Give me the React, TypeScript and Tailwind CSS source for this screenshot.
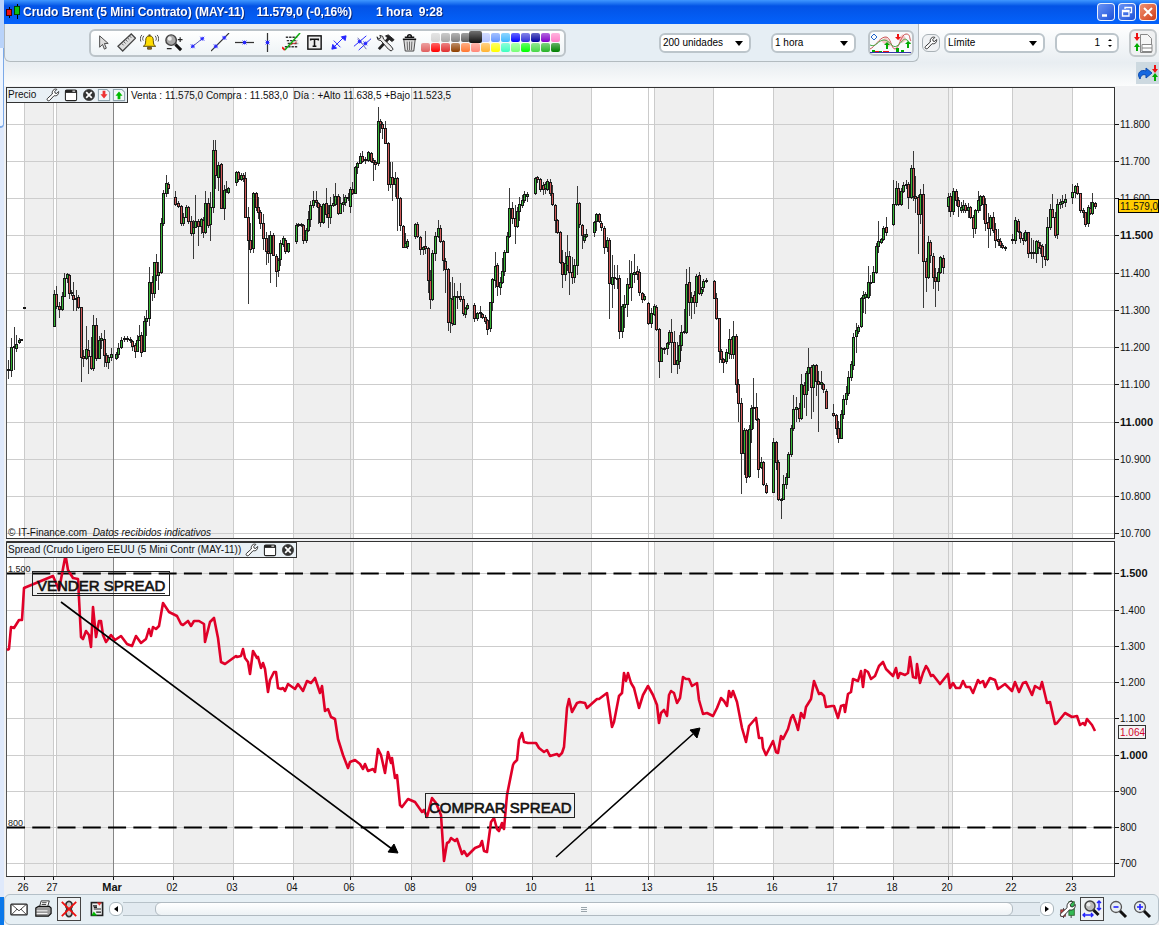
import type { ReactNode } from "react";

type Candle = [x: number, high: number, low: number, top: number, bottom: number, up: number];

const CANDLES: Candle[] = [
  [8,360,378,369,370,1],[11,338,376,347,370,1],[14,327,369,346,347,1],[16,335,351,344,348,1],[19,338,343,340,342,1],[21,339,340,339,340,1],[24,307,308,307,308,1],
  [54,290,326,294,326,1],[56,286,308,294,306,0],[59,302,317,306,309,0],[62,292,310,296,309,1],[64,273,296,278,296,1],[67,273,282,274,278,1],[69,274,298,275,293,0],[71,290,295,292,293,0],[73,282,310,295,299,0],[76,290,310,298,299,0],[78,295,308,297,307,0],[81,307,381,307,357,0],[83,350,366,356,358,0],[86,326,359,349,358,1],[88,340,373,350,356,0],[91,337,369,356,368,0],[93,315,370,325,368,1],[96,318,360,325,358,0],[99,336,358,340,358,1],[101,333,348,338,340,1],[104,330,366,339,355,0],[106,353,366,355,362,0],[108,355,368,357,362,1],[111,348,360,354,357,1],
  [116,352,359,354,358,1],[118,343,357,348,354,1],[121,337,348,340,347,1],[124,336,341,338,339,1],[127,336,341,338,339,1],[130,337,342,339,340,1],[132,340,350,341,346,0],[135,343,357,345,351,0],[137,335,351,340,351,1],[139,325,340,336,340,1],[141,332,356,335,352,0],[144,316,350,321,351,1],[146,310,335,318,321,1],[149,267,325,282,318,1],[152,276,300,282,293,0],[154,262,297,262,293,1],[156,254,280,262,275,0],[158,262,289,272,275,1],[161,218,273,223,272,1],[163,190,225,193,223,1],[166,175,196,183,193,1],[168,182,193,184,188,0],
  [175,191,205,197,204,0],[178,201,207,203,206,0],[181,205,225,206,223,0],[183,213,225,217,223,1],[186,205,217,207,217,1],[188,206,223,207,221,0],[191,216,235,221,233,0],[193,220,258,227,233,1],[195,195,227,221,227,1],[198,219,245,221,226,0],[201,218,233,219,226,1],[203,217,237,220,232,0],[205,191,233,203,232,1],[208,198,227,203,225,0],[210,192,240,207,224,1],[213,140,212,150,207,1],[215,140,188,150,175,0],[218,162,190,165,177,1],[221,163,208,164,208,0],[224,185,219,190,208,1],[226,181,192,189,190,1],[228,187,193,188,192,1],
  [236,171,185,172,182,1],[238,171,181,172,179,0],[241,173,180,175,179,1],[243,173,181,175,178,0],[245,172,217,178,217,0],[248,207,303,217,240,0],[250,223,252,240,249,0],[253,192,252,193,248,1],[256,192,210,193,207,0],[258,197,218,207,212,0],[260,210,228,212,223,0],[263,214,249,223,238,0],[266,232,264,238,251,0],[268,235,262,251,253,0],[270,231,282,235,253,1],[273,233,255,235,255,0],[276,254,286,256,271,0],[278,258,276,260,270,1],[280,240,265,243,259,1],[283,236,246,238,244,1],[285,238,253,240,251,0],[288,243,252,243,251,1],
  [296,223,243,225,241,1],[298,223,226,224,225,1],[301,223,226,224,225,1],[303,224,243,225,240,0],[306,228,242,230,240,1],[308,211,231,219,230,1],[310,201,226,205,219,1],[313,191,207,200,205,1],[316,191,206,200,202,0],[318,202,223,203,207,0],[320,204,226,206,222,0],[323,203,223,204,222,1],[326,188,217,203,214,0],[328,205,227,213,217,0],[330,197,223,205,217,1],[333,194,206,203,205,1],[335,183,205,196,204,1],[338,194,214,196,213,0],[340,197,213,203,213,1],[343,194,211,202,204,1],[345,195,205,197,202,1],[348,193,200,197,198,1],[350,187,212,189,206,1],[352,182,194,189,193,0],
  [355,166,193,167,193,1],[357,162,173,163,167,1],[360,153,163,156,163,1],[362,151,162,156,161,0],[365,157,163,159,160,1],[368,151,161,152,160,1],[371,152,162,153,161,0],[373,158,180,160,162,0],[375,160,169,162,164,0],[378,107,165,121,163,1],[380,119,132,121,124,0],[382,122,138,124,128,0],[385,121,143,128,143,0],[388,142,190,143,184,0],[390,162,187,177,184,1],[392,162,200,177,184,0],[395,172,196,178,184,1],[397,177,230,178,198,0],[400,197,230,198,225,0],[403,225,247,226,247,0],[405,233,247,243,247,1],[407,239,248,241,246,1],
  [415,223,238,224,236,1],[417,222,237,224,236,0],[420,236,254,237,249,0],[423,246,254,247,249,1],[425,231,253,246,248,0],[428,247,292,248,280,0],[430,270,308,280,299,0],[432,250,300,253,299,1],[435,232,260,236,253,1],[438,220,237,228,236,1],[440,225,242,228,241,0],[443,240,270,241,260,0],[445,258,292,261,269,0],[448,268,330,269,322,0],[450,282,332,298,322,1],[452,277,325,299,323,0],[454,283,324,296,324,1],[457,291,308,296,297,1],[460,283,301,296,299,0],[463,296,315,299,313,0],[465,307,317,308,314,1],[467,303,309,305,308,1],
  [474,303,321,305,318,0],[477,312,320,313,318,1],[480,306,317,312,313,1],[482,313,318,314,317,0],[485,315,323,317,321,0],[487,319,334,320,329,0],[490,302,331,302,328,1],[492,278,310,279,302,1],[495,252,287,266,280,1],[497,263,295,265,286,0],[500,277,294,282,287,1],[502,258,283,271,282,1],[504,250,275,252,271,1],[507,232,252,236,252,1],[509,188,237,208,236,1],[512,202,223,208,218,0],[515,205,243,218,226,0],[517,207,227,211,226,1],[519,197,220,204,211,1],[522,195,207,200,205,1],[524,191,202,194,200,1],[527,192,201,194,196,1],
  [535,177,194,178,193,1],[537,176,182,177,179,0],[540,178,191,179,189,0],[543,182,194,185,189,0],[545,182,193,184,188,1],[547,179,190,181,189,1],[550,179,195,182,193,0],[552,185,205,193,204,0],[555,204,232,205,220,0],[557,219,233,220,232,0],[560,231,263,232,262,0],[562,250,287,262,274,0],[565,252,280,263,274,1],[567,235,270,256,265,1],[569,251,294,256,272,0],[572,257,283,272,277,0],[574,259,282,265,277,1],[577,186,274,203,265,1],[579,202,227,203,224,0],[582,224,248,225,235,0],[584,234,242,236,240,1],[586,229,237,234,236,1],
  [594,221,236,222,232,1],[596,213,230,214,221,1],[599,213,222,214,221,0],[601,221,230,223,227,0],[604,226,253,228,247,0],[607,237,251,240,247,1],[609,238,318,240,283,0],[612,255,307,277,284,1],[614,265,288,277,278,1],[617,265,288,278,279,1],[619,275,338,278,331,0],[622,304,337,306,331,1],[624,295,327,304,307,1],[627,278,316,284,304,1],[629,260,288,284,287,0],[631,261,300,273,287,1],[634,254,282,272,274,1],[637,266,279,271,274,0],[639,269,295,272,292,0],[642,292,302,293,299,0],[644,294,300,296,299,1],
  [648,302,324,303,323,0],[651,308,327,313,323,1],[654,304,315,306,314,1],[656,305,330,307,329,0],[659,328,377,329,361,0],[661,347,361,348,361,1],[664,347,353,348,349,1],[667,342,354,343,348,1],[669,330,344,332,342,1],[671,319,372,332,342,0],[674,331,364,342,364,0],[677,342,373,360,364,1],[679,335,368,345,361,1],[681,325,350,332,345,1],[684,309,333,331,332,1],[686,269,333,284,332,1],[689,267,315,282,302,0],[691,292,318,297,302,1],[694,291,313,295,302,0],[696,274,306,276,302,1],[699,272,294,275,293,0],[701,287,295,289,293,1],[703,279,291,281,287,1],[706,278,282,280,281,1],
  [714,280,298,281,298,0],[716,293,319,298,318,0],[719,318,362,318,351,0],[721,349,362,351,359,0],[723,358,372,359,362,0],[726,349,363,352,361,1],[729,329,358,339,353,1],[731,337,358,339,354,0],[733,321,358,336,354,1],[736,334,392,336,384,0],[738,379,421,384,403,0],[741,398,493,403,453,0],[744,428,474,430,453,1],[746,429,482,430,477,0],[749,425,477,429,476,1],[751,405,442,408,429,1],[753,378,428,407,408,1],[756,393,420,407,419,0],[758,418,477,419,469,0],[761,457,468,462,467,1],[763,461,485,462,484,0],[766,483,493,485,492,0],
  [773,438,492,442,492,1],[776,441,469,442,462,0],[778,460,500,462,499,0],[781,498,518,499,500,0],[783,475,499,484,499,1],[786,473,488,477,484,1],[788,452,477,454,477,1],[791,425,456,428,454,1],[793,395,430,409,428,1],[796,397,421,407,409,1],[799,403,421,408,418,0],[801,374,419,384,418,1],[804,382,407,385,394,0],[806,371,415,373,394,1],[808,348,390,367,373,1],[811,365,418,367,387,0],[813,364,411,365,387,1],[816,364,395,365,381,0],[818,371,431,381,384,0],[821,371,388,382,384,1],[823,383,392,384,389,0],[826,389,408,391,408,0],
  [833,404,416,413,415,0],[836,414,434,415,428,0],[838,421,442,428,438,0],[841,410,438,414,438,1],[843,395,418,399,414,1],[846,386,404,393,399,1],[848,371,395,377,393,1],[851,361,380,364,377,1],[853,333,369,337,365,1],[856,323,352,330,336,1],[858,325,333,327,331,1],[861,297,327,298,326,1],[863,291,312,295,298,1],[865,292,313,294,297,1],[868,266,298,282,297,1],[870,275,295,282,283,1],[873,266,282,272,282,1],[876,243,273,246,272,1],[878,221,252,241,246,1],[881,238,243,239,242,1],[883,226,240,228,239,1],[886,217,235,227,232,0],
  [893,180,225,204,224,1],[896,181,205,188,204,1],[898,183,205,188,204,0],[901,188,205,191,204,1],[903,182,192,185,191,1],[906,180,188,184,185,1],[908,182,208,184,197,0],[911,165,198,168,197,1],[913,151,200,168,196,0],[915,176,212,196,198,0],[918,195,253,197,214,0],[920,189,223,194,214,1],[923,184,307,194,261,0],[926,258,291,261,277,0],[928,236,278,242,277,1],[930,240,262,242,255,0],[933,253,288,256,277,0],[935,268,306,277,281,0],[938,268,290,272,281,1],[940,256,273,257,272,1],[943,255,273,258,267,0],
  [948,193,211,197,206,1],[950,193,216,196,211,0],[953,188,214,191,211,1],[956,189,205,191,200,0],[958,197,216,200,206,0],[961,202,212,207,210,1],[963,200,212,205,209,1],[965,203,212,205,210,0],[968,203,217,207,210,1],[970,206,218,207,217,0],[973,215,237,217,228,0],[975,209,233,210,228,1],[978,191,212,200,210,1],[980,195,210,196,205,1],[983,195,219,196,204,0],[985,198,230,204,223,0],[988,213,247,222,228,0],[990,215,235,217,228,1],[993,212,232,217,230,0],[995,223,247,229,240,0],[998,229,245,239,241,0],[1000,238,247,241,245,0],[1002,243,248,245,247,0],[1005,246,250,247,248,0],
  [1012,234,243,239,240,1],[1015,217,243,220,240,1],[1018,219,232,221,231,0],[1020,231,242,232,238,0],[1023,233,244,238,240,0],[1025,230,241,232,240,1],[1028,232,257,232,253,0],[1031,238,258,252,253,1],[1033,240,258,252,253,1],[1036,240,262,241,253,1],[1038,240,253,242,247,0],[1040,242,253,245,248,0],[1042,244,267,246,256,0],[1045,244,265,256,259,0],[1047,217,260,227,259,1],[1050,204,229,209,227,1],[1052,194,217,209,217,0],[1055,212,237,217,235,0],[1057,199,238,204,234,1],[1060,199,208,202,204,1],[1062,195,207,201,203,1],[1065,194,206,199,202,1],
  [1072,184,203,192,197,1],[1075,185,197,186,192,1],[1077,183,194,186,193,0],[1080,193,212,193,210,0],[1083,208,217,210,212,0],[1085,212,226,212,224,0],[1088,205,226,207,223,1],[1090,202,214,208,213,0],[1092,193,214,202,213,1],[1095,202,208,203,206,0],
];

const SPREAD =
  "7,650 9,649 11,627 14,628 19,620 22,620 24,588 53,576 59,590 65,558 66,558 68,570 73,578 78,579 81,637 83,639 86,631 89,635 91,647 93,607 96,637 99,621 101,621 103,635 106,642 111,635 115,640 121,636 127,644 132,646 136,636 141,643 146,639 149,629 151,636 153,627 156,629 159,626 163,603 169,612 177,616 181,624 183,625 188,621 191,626 194,621 199,621 204,624 205,642 210,622 214,618 218,638 221,662 225,664 236,656 237,657 241,656 243,649 245,658 248,662 250,674 253,651 257,658 258,657 261,668 263,663 265,669 268,692 270,680 274,672 276,672 278,688 281,689 283,688 285,691 288,684 295,689 298,684 303,691 307,681 311,683 315,678 320,693 322,686 325,711 328,709 331,717 335,719 338,739 343,755 348,768 350,762 355,760 360,764 363,769 365,764 368,771 373,769 375,772 378,749 381,755 385,773 388,752 391,763 392,758 395,778 397,775 400,805 402,807 408,799 415,802 422,812 424,810 427,817 432,798 436,803 441,815 444,861 447,843 449,842 451,838 455,841 457,839 462,854 464,851 467,856 475,848 480,846 482,841 484,851 487,852 491,822 494,818 497,829 499,831 502,823 504,829 507,795 513,765 514,763 517,760 519,740 522,733 524,742 528,743 536,743 539,748 544,752 547,750 550,756 557,754 559,756 562,753 564,747 567,708 569,699 572,712 577,703 580,702 585,703 587,708 597,699 599,699 607,693 612,727 614,722 619,696 622,693 624,673 626,681 628,673 631,683 634,688 639,708 643,695 648,686 653,695 657,705 659,723 661,713 664,710 667,716 669,695 671,691 674,693 677,703 680,698 683,677 686,679 689,679 692,686 697,683 699,700 703,714 707,713 713,716 717,708 721,698 724,701 727,706 729,691 731,697 733,691 737,702 742,728 746,742 749,726 756,718 759,738 762,738 763,748 766,755 773,741 776,752 778,753 781,736 783,739 788,729 791,718 793,715 796,723 798,730 801,713 804,718 806,707 811,699 814,681 819,694 821,693 824,696 826,707 832,706 834,706 838,718 841,706 844,705 845,712 848,694 851,692 853,679 858,681 861,671 863,687 865,670 868,672 871,679 875,676 879,666 883,662 886,669 893,676 896,668 898,678 900,673 905,675 908,673 910,657 913,677 916,678 917,664 920,683 923,673 926,666 928,669 931,676 933,675 940,684 948,674 950,688 953,683 956,688 960,688 963,681 966,687 970,687 973,693 978,680 980,683 983,681 985,687 990,678 995,680 998,689 1005,684 1012,691 1015,682 1019,692 1023,683 1026,682 1032,695 1035,686 1040,689 1042,682 1047,703 1050,702 1055,724 1057,723 1065,713 1072,717 1077,716 1080,725 1083,723 1085,725 1087,719 1092,725 1095,731";

const BANDS = [[24, 29], [57, 56], [173, 60], [293, 60], [411, 61], [532, 59], [654, 59], [773, 60], [893, 60], [1012, 60]];
const DAY_LINES = [24, 53, 56, 173, 233, 293, 350, 353, 411, 472, 532, 591, 648, 654, 713, 773, 833, 893, 948, 952, 1012, 1072];
const PRICE_ROWS: [number, string][] = [[124, "11.800"], [161, "11.700"], [198, "11.600"], [235, "11.500"], [273, "11.400"], [310, "11.300"], [347, "11.200"], [384, "11.100"], [422, "11.000"], [459, "10.900"], [496, "10.800"], [533, "10.700"]];
const SPREAD_ROWS: [number, string][] = [[573, "1.500"], [610, "1.400"], [646, "1.300"], [682, "1.200"], [718, "1.100"], [755, "1.000"], [791, "900"], [827, "800"], [863, "700"]];
const DAYS: [number, string][] = [[24, "26"], [53, "27"], [113, "Mar"], [173, "02"], [233, "03"], [293, "04"], [350, "06"], [411, "08"], [472, "09"], [532, "10"], [591, "11"], [648, "13"], [713, "15"], [773, "16"], [833, "17"], [893, "18"], [948, "20"], [1012, "22"], [1072, "23"]];

function Grid({ top, bottom, rows }: { top: number; bottom: number; rows: [number, string][] }) {
  return (
    <g shapeRendering="crispEdges">
      <rect x={6} y={top} width={1108} height={bottom - top} fill="#fff" />
      {BANDS.map(([x, w]) => <rect key={x} x={x} y={top} width={w} height={bottom - top} fill="#efefef" />)}
      {rows.map(([y]) => <rect key={y} x={6} y={y} width={1108} height={1} fill="#cdcdcd" />)}
      {DAY_LINES.map((x) => <rect key={x} x={x} y={top} width={1} height={bottom - top} fill="#cbcbcb" />)}
      <rect x={113} y={top} width={1} height={bottom - top} fill="#858585" />
      <rect x={6} y={top} width={1109} height={1} fill="#333" />
      <rect x={6} y={bottom} width={1109} height={1} fill="#333" />
      <rect x={6} y={top} width={1} height={bottom - top} fill="#555" />
      <rect x={1114} y={top} width={1} height={bottom - top + 1} fill="#333" />
    </g>
  );
}

function AxisLabels({ rows, bold }: { rows: [number, string][]; bold: string[] }) {
  return (
    <g fill="#111">
      {rows.map(([y, label]) => {
        const strong = bold.includes(label);
        return (
          <g key={label}>
            <rect x={1115} y={y} width={4} height={1} shapeRendering="crispEdges" />
            <text x={1120} y={y + 4} fontSize={strong ? 11 : 10} fontWeight={strong ? 700 : 400}>{label}</text>
          </g>
        );
      })}
    </g>
  );
}

function PriceChart() {
  return (
    <svg viewBox="4 86 1155 454" className="block h-auto w-full" role="img" aria-label="Precio">
      <Grid top={87} bottom={538} rows={PRICE_ROWS} />
      <g shapeRendering="crispEdges">
        {CANDLES.map(([x, h, l, t, b]) => (
          <g key={x}>
            <rect x={x} y={h} width={1} height={l - h + 1} fill="#3a3a3a" />
            <rect x={x - 1} y={t} width={3} height={Math.max(1, b - t + 1)} fill="#161616" />
          </g>
        ))}
        {CANDLES.filter(([, , , t, b]) => b - t > 1).map(([x, , , t, b, up]) => (
          <rect key={x} x={x} y={t + 1} width={1} height={b - t - 1} fill={up ? "#36b436" : "#d05a5a"} />
        ))}
      </g>
      <AxisLabels rows={PRICE_ROWS} bold={["11.500", "11.000"]} />
      <rect x={1118.5} y={199.5} width={40} height={13} fill="#fc0" stroke="#000" />
      <text x={1120} y={210} fontSize={10} fill="#111">11.579,0</text>
    </svg>
  );
}

function SpreadChart() {
  return (
    <svg viewBox="4 540 1155 354" className="block h-auto w-full" role="img" aria-label="Spread">
      <Grid top={541} bottom={876} rows={SPREAD_ROWS} />
      <path d="M7 573.5H1114M7 827.5H1114" stroke="#000" strokeWidth={2} strokeDasharray="18 7.27" />
      <g fontSize={9} fill="#222">
        <text x={8} y={572}>1.500</text>
        <text x={8} y={826}>800</text>
      </g>
      <polyline points={SPREAD} fill="none" stroke="#e00028" strokeWidth={2.6} strokeLinejoin="round" />
      <g fill="none" stroke="#222">
        <rect x={32.5} y={571.5} width={137} height={24} />
        <path d="M37 593.5H165" />
        <rect x={425.5} y={793.5} width={149} height={24} />
      </g>
      <g fontSize={15} fill="#111" stroke="#111" strokeWidth={0.6}>
        <text x={37} y={591}>VENDER SPREAD</text>
        <text x={429} y={813}>COMPRAR SPREAD</text>
      </g>
      <path d="M61 602L392 849M556 857L693 734" stroke="#000" strokeWidth={1.6} />
      <path d="M398 853l-10-1 6-8zM700 728l-10 2 7 8z" stroke="#000" />
      <AxisLabels rows={SPREAD_ROWS} bold={["1.500", "1.000"]} />
      <rect x={1118.5} y={725.5} width={27} height={13} fill="#f4f4f4" stroke="#333" />
      <text x={1120} y={736} fontSize={10} fill="#d2042d">1.064</text>
      <g fill="#111" textAnchor="middle">
        {DAYS.map(([x, d]) => (
          <g key={d}>
            <rect x={x} y={877} width={1} height={3} shapeRendering="crispEdges" />
            <text x={x - 1} y={891} fontSize={d === "Mar" ? 11 : 10} fontWeight={d === "Mar" ? 700 : 400}>{d}</text>
          </g>
        ))}
      </g>
    </svg>
  );
}

function Icon({ children, size = 20 }: { children: ReactNode; size?: number }) {
  return (
    <svg viewBox="0 0 20 20" width={size} height={size} fill="none" stroke="#333" className="block shrink-0" aria-hidden="true">
      {children}
    </svg>
  );
}

const BlueDots = ({ at }: { at: [number, number][] }) => (
  <>{at.map(([x, y]) => <path key={`${x}-${y}`} d={`M${x - 2} ${y - 2}l4 4m0-4l-4 4M${x} ${y - 2}v4M${x - 2} ${y}h4`} stroke="#22f" strokeWidth={1} />)}</>
);

const WRENCH = "M3 16L10 9.600C9.500 6.500 10.500 4.500 12.500 3.200C13.800 2.400 15.200 2.400 16.500 3L13.500 6L14 8.300L16.300 8.800L19 6C19.400 8.400 18.400 10.400 16.700 11.500C15.200 12.400 13.600 12.200 12.600 11.900L6 18.900C3.800 20.200 1.500 18 3 16Z";

const Wrench = ({ size = 14 }: { size?: number }) => (
  <Icon size={size}><path d={WRENCH} transform="translate(-1 -1)" fill="#fff" stroke="#222" strokeWidth={1.3} /></Icon>
);

const Lens = ({ sign }: { sign: ReactNode }) => (
  <Icon>
    <circle cx={8} cy={8} r={5.5} fill="#e8eef2" stroke="#555" strokeWidth={1.3} />
    <path d="M12 12l6 6" stroke="#111" strokeWidth={3} />
    {sign}
  </Icon>
);

const TOOLS: [string, ReactNode][] = [
  ["Cursor", <path d="M7 3v12l3-3 2 5 2-1-2-5h4z" fill="#ddd" stroke="#444" />],
  ["Regla", <><path d="M1 14L15 1l4.500 4.500L6 19z" fill="#ddd" stroke="#444" strokeWidth={1.3} /><path d="M5 11l2 2m0-4l2 2m0-4l2 2m0-4l2 2m0-4l2 2" stroke="#555" /></>],
  ["Alarma", <><path d="M10 3c-3 0-4 2-4 5 0 4-1 5-2.500 6h13C15 13 14 12 14 8c0-3-1-5-4-5z" fill="#fd0" stroke="#554400" /><path d="M8 15h4v2H8z" fill="#a70" stroke="#542" /><path d="M10 1.500v2" stroke="#542" strokeWidth={2} /><path d="M4 3C2.500 5 2.500 7 3.500 8M2 2C0 4 0 7 1 9M16 3c1.500 2 1.500 4 .5 5M18 2c2 2 2 5 1 7" stroke="#444" /></>],
  ["Lupa", <><circle cx={7.500} cy={7.500} r={5.500} fill="#aaa" stroke="#444" strokeWidth={1.500} /><circle cx={6} cy={6} r={2.200} fill="#eee" stroke="none" /><path d="M12 12l6 6" stroke="#111" strokeWidth={3.200} /><path d="M14.500 7h5M17 4.500v5M3 16.500h5" stroke="#222" strokeWidth={1.200} /></>],
  ["Segmento", <><path d="M5 14L15 6" stroke="#55a" /><BlueDots at={[[5, 14], [15, 6]]} /></>],
  ["Recta", <><path d="M0 19L19 0" stroke="#333" strokeWidth={1.200} /><BlueDots at={[[5, 14], [14, 5]]} /></>],
  ["Horizontal", <><path d="M0 10h20" stroke="#333" strokeWidth={1.300} /><BlueDots at={[[10, 10]]} /></>],
  ["Vertical", <><path d="M10 0v20" stroke="#333" strokeWidth={1.300} /><BlueDots at={[[10, 10]]} /></>],
  ["Patrones", <><path d="M4 4.500h12M5 8h11M6 11h11M3 14.500h13" stroke="#333" strokeWidth={1.500} strokeDasharray="2.500 1" /><path d="M9 13c3-5 5 1 6-4" stroke="#d22" /><path d="M0 15l3 3" stroke="#e11" strokeWidth={2} /><path d="M3 18L19 0" stroke="#1a1" strokeWidth={1.600} /></>],
  ["Texto", <><rect x={3} y={3} width={14} height={14} fill="#eee" stroke="#111" strokeWidth={1.500} /><path d="M6 8V6.500h8V8M10 6.500V14M8 14h4" stroke="#111" strokeWidth={1.600} /></>],
  ["Flecha", <><path d="M5 15L15 5M5 8l7 7" stroke="#22f" /><path d="M3 17l5-1-4-4zM18 3l-5 1 4 4z" fill="#22f" stroke="#22f" /></>],
  ["Canal", <><path d="M1 14L14 3M6 18L19 6" stroke="#22f" /><path d="M5 5l9 12" stroke="#66a" /><BlueDots at={[[7, 9], [13, 11]]} /></>],
  ["Herramientas", <><path d="M3 17L14 5" stroke="#222" strokeWidth={3} /><path d="M10 3l3-1 6 5-2 2-4-3z" fill="#222" stroke="#222" /><path d="M4 2.500l3 1 1 3L16 14l2 3-2 2-3-2-8-9-3-1-1-3 2 2 2-1z" fill="#eee" stroke="#222" /></>],
  ["Borrar", <><path d="M4 7h12l-1.500 12h-9z" fill="#ddd" stroke="#444" /><path d="M7.500 9l.5 9M10 9v9M12.500 9l-.5 9" stroke="#666" /><path d="M3 6.500h14M5 4.500h10M8 4c0-3 4-3 4 0" stroke="#111" strokeWidth={1.500} /></>],
];

const COLORS_TOP = ["#d4d4d4", "#a8a8a8", "#808080", "#606060", "#111111", "#b4c4ff", "#6496ff", "#40b8ff", "#0000ff", "#3232d8", "#0000a0", "#8000c8", "#ff80c8"];
const COLORS_BOTTOM = ["#e06060", "#ff0000", "#e03030", "#904000", "#ff7832", "#ff8878", "#ffb432", "#ffff00", "#40ffc0", "#78ff78", "#00ff00", "#48d848", "#28b428", "#008000"];

function Swatch({ color }: { color: string }) {
  const selected = color === "#111111";
  return (
    <button
      type="button"
      aria-label={`Color ${color}`}
      className={`relative block shrink-0 rounded-xs bg-linear-to-b from-white/40 to-transparent ${selected ? "z-10 -mx-0.5 -mt-0.5 h-3 w-[13px]" : "h-[9px] w-[9px]"}`}
      style={{ backgroundColor: color }}
    />
  );
}

function Select({ label, value, width }: { label: string; value: string; width: string }) {
  return (
    <label className={`relative block h-5 ${width}`}>
      <span className="sr-only">{label}</span>
      <select defaultValue={value} className="block h-full w-full appearance-none rounded-md border-2 border-[#bcc5cb] bg-white pl-0.5 text-[10px] leading-4 text-black">
        <option>{value}</option>
      </select>
      <svg viewBox="0 0 8 5" className="pointer-events-none absolute top-2 right-2 h-[5px] w-2" aria-hidden="true"><path d="M0 0h8L4 5z" /></svg>
    </label>
  );
}

function CaptionButton({ label, close, children }: { label: string; close?: boolean; children: ReactNode }) {
  return (
    <button type="button" aria-label={label} className={`flex h-[18px] w-[18px] items-center justify-center rounded-sm border border-white/90 ${close ? "bg-linear-to-br from-[#f0906f] to-[#cf3a10]" : "bg-linear-to-br from-[#6b93f5] to-[#1c4fd8]"}`}>
      <svg viewBox="0 0 14 14" className="h-[14px] w-[14px]" fill="none" stroke="#fff" aria-hidden="true">{children}</svg>
    </button>
  );
}

function TitleBar() {
  return (
    <header className="flex h-6 items-center bg-linear-to-b from-[#3f97ff] via-[#0353e6] via-25% to-[#0462fb] pr-0.5 text-[12px] font-bold whitespace-pre text-white">
      <svg viewBox="0 0 16 16" className="mr-px ml-0.5 h-4 w-4" shapeRendering="crispEdges" aria-hidden="true">
        <path d="M3 3v11M11 0v15" stroke="#000" />
        <path d="M0.500 5.500h5v6h-5z" fill="#f01010" stroke="#400" />
        <path d="M8.500 2.500h5v8h-5z" fill="#10c010" stroke="#040" />
      </svg>
      <h1 className="drop-shadow-[1px_1px_0_#0a2a80]">Crudo Brent (5 Mini Contrato) (MAY-11)</h1>
      <span className="ml-3 drop-shadow-[1px_1px_0_#0a2a80]">11.579,0 (-0,16%)</span>
      <span className="ml-6 drop-shadow-[1px_1px_0_#0a2a80]">1 hora  9:28</span>
      <div className="ml-auto flex gap-[3px]">
        <CaptionButton label="Minimizar"><path d="M3 10.500h5" strokeWidth={2.500} /></CaptionButton>
        <CaptionButton label="Restaurar"><path d="M5 4V2.500h6.500v5H10M2.500 5.500H9V11H2.500zM2.500 6.500H9" strokeWidth={1.300} /></CaptionButton>
        <CaptionButton label="Cerrar" close><path d="M3 3l8 8M11 3l-8 8" strokeWidth={2} /></CaptionButton>
      </div>
    </header>
  );
}

function ChartThumb() {
  return (
    <svg viewBox="0 0 42 22" className="h-[22px] w-[42px]" fill="none" aria-hidden="true">
      <path d="M11 9l5-4 6 8-4 2zM27 7l6-5 4 6-5 3z" fill="#f5c5c5" />
      <path d="M0 17C5 15 9 6 15 5s6 12 10 12S31 2 36 2s3 5 5 7" stroke="#c55" />
      <path d="M0 13c6 3 8-5 14-5s8 9 13 6 6-9 10-6 3 4 4 3" stroke="#4a4" />
      <path d="M1 5l3-3 3 3-3 3z" stroke="#26c" />
      <path d="M16 17v-4h-2l3-3 3 3h-2v4zM37 16v-4h-2l3-3 3 3h-2v4z" fill="#0a0" />
      <path d="M27 2h2v3h2l-3 3-3-3h2z" fill="#e11" />
      <path d="M2 20v-2h3v2M9 20v-1h3v1M26 20v-4h3v4M31 20v-2h3v2" fill="#0a0" />
      <path d="M5 20v-1h4v1M13 20v-1h6v1" fill="#e11" />
      <path d="M0 20.500h41" stroke="#33a" />
    </svg>
  );
}

function Toolbar() {
  return (
    <div className="flex h-[38px] bg-linear-to-b from-white to-[#e9eef2]">
      <div className="flex flex-1 items-center rounded-b-md border border-t-0 border-[#b3bbc0] bg-[#e6eef4] pr-1">
        <div className="ml-[84px] flex h-7 w-[477px] items-center rounded-md border-2 border-[#bcc4c9] bg-linear-to-b from-white to-[#eef3f6]">
          <div className="flex flex-1">
            {TOOLS.map(([name, art]) => (
              <button key={name} type="button" aria-label={name} className="flex h-6 flex-1 items-center justify-center">
                <Icon size={19}>{art}</Icon>
              </button>
            ))}
          </div>
          <div className="mr-1 flex flex-col items-end gap-px">
            <div className="flex h-[9px] gap-px">{COLORS_TOP.map((c) => <Swatch key={c} color={c} />)}</div>
            <div className="flex h-[9px] gap-px">{COLORS_BOTTOM.map((c) => <Swatch key={c} color={c} />)}</div>
          </div>
        </div>
        <div className="ml-auto flex items-center gap-3">
          <Select label="Unidades" value="200 unidades" width="w-[92px]" />
          <div className="ml-2"><Select label="Intervalo" value="1 hora" width="w-[85px]" /></div>
          <button type="button" aria-label="Indicadores" className="flex h-[26px] w-[46px] items-center justify-center rounded-md border-2 border-[#bcc4c9] bg-[#f8fafb]"><ChartThumb /></button>
        </div>
      </div>
      <div className="flex w-60 items-center pr-0.5 pl-[3px]">
        <button type="button" aria-label="Configurar" className="flex h-[18px] w-[18px] items-center justify-center rounded-md border border-[#a9b1b6] bg-[#f0f2f4]"><Wrench /></button>
        <div className="ml-1"><Select label="Tipo de orden" value="Límite" width="w-[101px]" /></div>
        <div className="ml-2.5 flex h-5 w-16 items-center rounded-md border-2 border-[#bcc5cb] bg-white pr-1">
          <input aria-label="Cantidad" defaultValue="1" className="w-0 flex-1 bg-transparent text-right text-[10px] leading-4 text-black" />
          <div className="mr-px ml-2 flex flex-col gap-1">
            <button type="button" aria-label="Más" className="block"><svg viewBox="0 0 4 2" className="block h-0.5 w-1"><path d="M0 2h4L2 0z" /></svg></button>
            <button type="button" aria-label="Menos" className="block"><svg viewBox="0 0 4 2" className="block h-0.5 w-1"><path d="M0 0h4L2 2z" /></svg></button>
          </div>
        </div>
        <button type="button" aria-label="Órdenes" className="ml-auto flex h-7 w-7 items-center justify-center rounded-md border-2 border-[#c3c8cb] bg-[#f0f1f2]">
          <svg viewBox="0 0 22 22" className="h-[22px] w-[22px]" fill="none" stroke="#888" aria-hidden="true">
            <path d="M8.500 20.500v-18h7l4 4v14z" fill="#f6f6f6" />
            <path d="M10 12.500h10v7H10zM10 16h10" fill="#fff" />
            <path d="M4 1h2v4h2L5 9 2 5h2z" fill="#e11" stroke="none" />
            <path d="M4 19h2v-4h2l-3-4-3 4h2z" fill="#0a0" stroke="none" />
          </svg>
        </button>
      </div>
    </div>
  );
}

const WindowIcon = () => (
  <Icon size={14}><rect x={2} y={3} width={16} height={15} rx={2} fill="#fff" stroke="#222" strokeWidth={1.500} /><path d="M2 5h16" stroke="#222" strokeWidth={4} /><path d="M12 4.500h4" stroke="#fff" strokeWidth={1.500} /></Icon>
);
const CloseIcon = () => (
  <Icon size={14}><circle cx={10} cy={10} r={8} fill="#333" /><path d="M6 6l8 8M14 6l-8 8" stroke="#fff" strokeWidth={2.500} /></Icon>
);
const MoveIcon = ({ up }: { up?: boolean }) => (
  <Icon size={14}>
    <path d="M2 2h12l4 4v12H2z" fill="#f2f6f8" stroke="#90a4ae" strokeWidth={1.500} />
    {up ? <path d="M8 16v-5H5l5-6 5 6h-3v5z" fill="#0b0" stroke="none" /> : <path d="M8 4v5H5l5 6 5-6h-3V4z" fill="#e33" stroke="none" />}
  </Icon>
);

function ChartHeader({ title, top, children }: { title: string; top: string; children: ReactNode }) {
  return (
    <div className={`absolute left-0.5 ${top} flex h-4 items-center border border-[#333] bg-[#e9f0f5] px-px`}>
      <h2 className="mr-1">{title}</h2>
      {children}
    </div>
  );
}

function HeaderButton({ label, children }: { label: string; children: ReactNode }) {
  return <button type="button" aria-label={label} className="block">{children}</button>;
}

function BottomButton({ label, pressed, children }: { label: string; pressed?: boolean; children: ReactNode }) {
  return (
    <button type="button" aria-label={label} aria-pressed={pressed} className={`flex h-6 w-6 shrink-0 items-center justify-center ${pressed ? "border border-[#444] bg-[#eef1f3]" : ""}`}>
      {children}
    </button>
  );
}

function BottomBar() {
  return (
    <footer className="flex h-[31px] items-center rounded-md border border-[#b4c0c8] bg-[#e6eff4] px-0.5 pb-0.5">
      <BottomButton label="Correo"><Icon size={18}><rect x={1} y={4.500} width={18} height={12} rx={1} fill="#fff" stroke="#222" strokeWidth={1.500} /><path d="M2 5l8 7 8-7M2 16l6-6M18 16l-6-6" stroke="#333" /></Icon></BottomButton>
      <BottomButton label="Imprimir"><Icon size={18}><path d="M6 8l2-7h9l-2 7z" fill="#fff" stroke="#222" /><path d="M9 3h5M8.500 5h5" /><path d="M2 9l3-2h12l2 2v6l-3 3H2z" fill="#999" stroke="#111" strokeWidth={1.300} /><path d="M3 12h12M3 15h12" stroke="#fff" /></Icon></BottomButton>
      <div className="mr-1 ml-0.5"><BottomButton label="Desvincular" pressed><Icon size={18}><ellipse cx={10} cy={6} rx={3.500} ry={4.500} fill="#ccc" strokeWidth={2} /><ellipse cx={10} cy={14} rx={3.500} ry={4.500} fill="#ccc" strokeWidth={2} /><path d="M2 2l16 16M18 2L2 18" stroke="#e11" strokeWidth={2} /></Icon></BottomButton></div>
      <BottomButton label="Informe"><Icon size={16}><rect x={3} y={2} width={14} height={16} fill="#eee" stroke="#222" strokeWidth={2} /><path d="M5 6h5M6 10h9M9 14h6M6 8h4" stroke="#222" strokeWidth={1.500} /><path d="M10 2h6l-3 4z" fill="#e33" stroke="none" /><path d="M3 18h7l-4-5z" fill="#0b0" stroke="none" /></Icon></BottomButton>
      <button type="button" aria-label="Desplazar a la izquierda" className="flex h-[14px] w-[14px] shrink-0 items-center justify-center rounded-md border border-[#a9b5bc] bg-white"><svg viewBox="0 0 4 6" className="h-1.5 w-1"><path d="M4 0v6L0 3z" /></svg></button>
      <div role="scrollbar" aria-label="Historial" aria-controls="charts" aria-valuenow={50} className="flex h-[14px] flex-1 border-y border-[#b7c2c9] bg-[#e2eaf0] pr-[27px] pl-8">
        <div className="-my-px flex h-[14px] flex-1 items-center justify-center rounded-md border border-[#b0bac1] bg-linear-to-b from-white to-[#edf2f5]">
          <svg viewBox="0 0 6 6" className="h-1.5 w-1.5" stroke="#9aa5ab"><path d="M0 1.500h6M0 3.500h6M0 5.500h6" /></svg>
        </div>
      </div>
      <button type="button" aria-label="Desplazar a la derecha" className="flex h-[14px] w-[14px] shrink-0 items-center justify-center rounded-md border border-[#a9b5bc] bg-white"><svg viewBox="0 0 4 6" className="h-1.5 w-1"><path d="M0 0v6l4-3z" /></svg></button>
      <div className="ml-0.5 flex items-center">
        <BottomButton label="Estilo"><Icon size={18}><path d="M13.500 0v20M5 9v11" /><rect x={11} y={2} width={6} height={15} fill="#3b5" stroke="#363" /><rect x={2} y={11} width={5} height={7} fill="#e44" stroke="#633" /><path d={WRENCH} transform="translate(-1 -1)" fill="#fff" stroke="#222" /></Icon></BottomButton>
        <BottomButton label="Ajustar" pressed><Icon><circle cx={8} cy={7} r={5} fill="#bbb" stroke="#444" strokeWidth={1.500} /><circle cx={6.500} cy={5.500} r={2} fill="#eee" stroke="none" /><path d="M11.500 11l5 5" stroke="#111" strokeWidth={3} /><path d="M17 2v9M15 4l2-2 2 2M15 9l2 2 2-2M1 16h10M3 14l-2 2 2 2M9 14l2 2-2 2" stroke="#22f" strokeWidth={1.400} /></Icon></BottomButton>
        <div className="ml-0.5 flex">
          <BottomButton label="Alejar"><Lens sign={<path d="M5.500 8h5" stroke="#22f" strokeWidth={1.600} />} /></BottomButton>
          <BottomButton label="Acercar"><Lens sign={<path d="M5 8h6M8 5v6" stroke="#22f" strokeWidth={1.600} />} /></BottomButton>
        </div>
      </div>
      <span className="w-0.5" />
    </footer>
  );
}

export default function App() {
  return (
    <div className="flex bg-[#f0f1f3] font-['Liberation_Sans',Arial,sans-serif] text-[10px] leading-none text-[#111]">
      <div className="flex w-1 shrink-0 flex-col bg-[#dfe9fb]">
        <div className="h-12 bg-[#b9d3fa]" />
        <div className="h-20 rounded-br-sm border-r border-b-2 border-[#7ba9e8] bg-[#eef5ff]" />
        <div className="mt-auto h-7 bg-[#0a78ea]" />
      </div>
      <div className="min-w-0 flex-1">
        <TitleBar />
        <Toolbar />
        <div className="flex h-6 items-start justify-end bg-linear-to-b from-[#e8edf1] to-[#fbfcfc]">
          <button type="button" aria-label="Rehacer órdenes" className="flex h-[22px] w-[23px] items-center justify-center bg-[#cdd9e0]">
            <svg viewBox="0 0 22 20" className="h-5 w-[22px]" aria-hidden="true">
              <path d="M3 16C-1 10 4 6 9 8V5l6 5-6 5v-3c-3-1-5 0-6 4z" fill="#1668e0" stroke="#0a4ab0" />
              <path d="M17 2h2v4h2l-3 4-3-4h2z" fill="#e11" />
              <path d="M17 18h2v-4h2l-3-4-3 4h2z" fill="#0a0" />
            </svg>
          </button>
        </div>
        <main id="charts">
          <section className="relative">
            <PriceChart />
            <ChartHeader title="Precio" top="top-px">
              <div className="ml-1.5 flex gap-px">
                <HeaderButton label="Configurar precio"><Wrench /></HeaderButton>
                <div className="mr-[3px] ml-[3px]"><HeaderButton label="Maximizar precio"><WindowIcon /></HeaderButton></div>
                <HeaderButton label="Cerrar precio"><CloseIcon /></HeaderButton>
                <HeaderButton label="Bajar"><MoveIcon /></HeaderButton>
                <HeaderButton label="Subir"><MoveIcon up /></HeaderButton>
              </div>
            </ChartHeader>
            <p className="absolute top-[5px] left-[127px] whitespace-pre">Venta : 11.575,0 Compra : 11.583,0  Día : +Alto 11.638,5 +Bajo 11.523,5</p>
            <p className="absolute bottom-0.5 left-1 whitespace-pre">© IT-Finance.com  <em>Datos recibidos indicativos</em></p>
          </section>
          <section className="relative">
            <SpreadChart />
            <ChartHeader title="Spread (Crudo Ligero EEUU (5 Mini Contr (MAY-11))" top="top-0.5">
              <div className="flex gap-1">
                <HeaderButton label="Configurar spread"><Wrench /></HeaderButton>
                <HeaderButton label="Maximizar spread"><WindowIcon /></HeaderButton>
                <HeaderButton label="Cerrar spread"><CloseIcon /></HeaderButton>
              </div>
            </ChartHeader>
          </section>
        </main>
        <BottomBar />
      </div>
    </div>
  );
}
